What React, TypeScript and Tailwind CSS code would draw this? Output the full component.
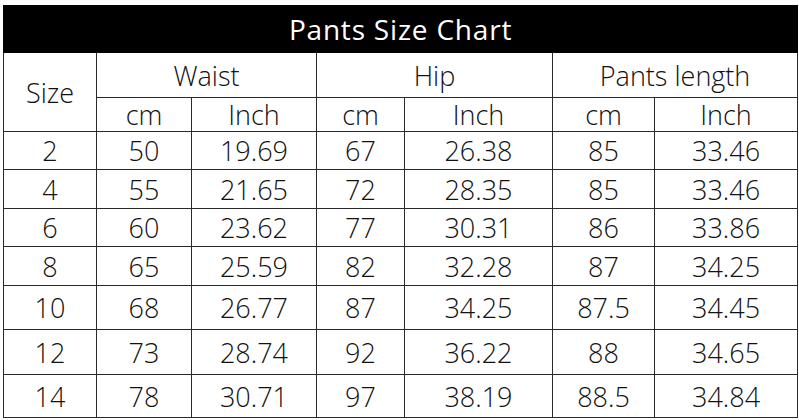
import React from "react";

const rows: [string, string, string, string, string, string, string][] = [
  ["2", "50", "19.69", "67", "26.38", "85", "33.46"],
  ["4", "55", "21.65", "72", "28.35", "85", "33.46"],
  ["6", "60", "23.62", "77", "30.31", "86", "33.86"],
  ["8", "65", "25.59", "82", "32.28", "87", "34.25"],
  ["10", "68", "26.77", "87", "34.25", "87.5", "34.45"],
  ["12", "73", "28.74", "92", "36.22", "88", "34.65"],
  ["14", "78", "30.71", "97", "38.19", "88.5", "34.84"],
];

const rowHeights = ["h-[38px]", "h-[39px]", "h-[38px]", "h-[39px]", "h-[44px]", "h-[45px]", "h-[43px]"];

const cell = "border border-[#2a2a2a] text-center align-middle p-0 leading-none";

export default function App() {
  return (
    <div className="w-[799px] h-[420px] bg-white pt-[5px] pl-[3px]" style={{ fontFamily: '"Open Sans", "Noto Sans", sans-serif' }}>
      <table className="table-fixed border-collapse w-[794px] text-[27px] font-[350] text-[#111111]">
        <colgroup>
          <col className="w-[93px]" />
          <col className="w-[95px]" />
          <col className="w-[125px]" />
          <col className="w-[88px]" />
          <col className="w-[148px]" />
          <col className="w-[102px]" />
          <col className="w-[143px]" />
        </colgroup>
        <tbody>
          <tr className="h-[47px]">
            <td colSpan={7} className="bg-black text-white text-center align-middle p-0 leading-none border border-black text-[28px] font-normal tracking-[0.8px]">
              Pants Size Chart
            </td>
          </tr>
          <tr className="h-[45px]">
            <td rowSpan={2} className={cell}>Size</td>
            <td colSpan={2} className={cell}>Waist</td>
            <td colSpan={2} className={cell}>Hip</td>
            <td colSpan={2} className={cell}>Pants length</td>
          </tr>
          <tr className="h-[34px]">
            <td className={cell}>cm</td>
            <td className={cell}>Inch</td>
            <td className={cell}>cm</td>
            <td className={cell}>Inch</td>
            <td className={cell}>cm</td>
            <td className={cell}>Inch</td>
          </tr>
          {rows.map((r, i) => (
            <tr key={i} className={rowHeights[i]}>
              {r.map((v, j) => (
                <td key={j} className={cell}>{v}</td>
              ))}
            </tr>
          ))}
        </tbody>
      </table>
    </div>
  );
}
